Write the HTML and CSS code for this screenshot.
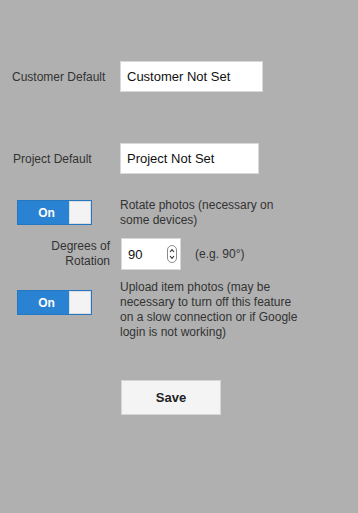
FILE: index.html
```html
<!DOCTYPE html>
<html>
<head>
<meta charset="utf-8">
<link rel="stylesheet" href="styles.css">
</head>
<body>
<div class="page">
  <div class="row row-customer">
    <div class="label label-customer">Customer Default</div>
    <div class="input input-customer">Customer Not Set</div>
  </div>
  <div class="row row-project">
    <div class="label label-project">Project Default</div>
    <div class="input input-project">Project Not Set</div>
  </div>
  <div class="row row-toggle row-rotate">
    <div class="toggle-cell">
      <div class="toggle"><span class="toggle-on">On</span><span class="knob"></span></div>
    </div>
    <div class="desc">Rotate photos (necessary on<br>some devices)</div>
  </div>
  <div class="row row-degrees">
    <div class="label-right">Degrees of<br>Rotation</div>
    <div class="number">
      <span class="num-val">90</span>
      <svg class="spin" width="10" height="18" viewBox="0 0 10 18">
        <rect x="0.5" y="0.5" width="9" height="17" rx="4.5" fill="none" stroke="#8a8a8a" stroke-width="1"/>
        <path d="M3 7 L5 4.6 L7 7" fill="none" stroke="#333" stroke-width="1.1"/>
        <path d="M3 11 L5 13.4 L7 11" fill="none" stroke="#333" stroke-width="1.1"/>
      </svg>
    </div>
    <div class="note">(e.g. 90°)</div>
  </div>
  <div class="row row-toggle row-upload">
    <div class="toggle-cell">
      <div class="toggle"><span class="toggle-on">On</span><span class="knob"></span></div>
    </div>
    <div class="desc">Upload item photos (may be<br>necessary to turn off this feature<br>on a slow connection or if Google<br>login is not working)</div>
  </div>
  <div class="row row-save">
    <div class="save">Save</div>
  </div>
</div>
</body>
</html>
```
FILE: styles.css
```css
html, body {
  margin: 0;
  padding: 0;
  background: #b0b0b0;
  height: 100%;
}
body {
  font-family: "Liberation Sans", Arial, Helvetica, sans-serif;
  color: #333;
}
.page {
  display: flex;
  flex-direction: column;
  padding-top: 61px;
}
.row {
  display: flex;
  align-items: center;
}
.label {
  width: 120px;
  box-sizing: border-box;
  font-size: 12px;
  color: #333;
}
.label-customer { padding-left: 12px; }
.label-project { padding-left: 13px; }
.input {
  background: #fff;
  border: 1px solid #d8d8d8;
  box-sizing: border-box;
  height: 31px;
  display: flex;
  align-items: center;
  padding-left: 6px;
  font-size: 13px;
  color: #111;
}
.input-customer { width: 143px; }
.row-project { margin-top: 51px; }
.input-project { width: 139px; }
.row-toggle {
  align-items: flex-start;
}
.row-rotate { margin-top: 24px; }
.row-upload { margin-top: 10px; }
.toggle-cell {
  width: 120px;
  padding-left: 17px;
  box-sizing: border-box;
}
.row-rotate .toggle-cell { padding-top: 2px; }
.row-upload .toggle-cell { padding-top: 10px; }
.toggle {
  width: 75px;
  height: 25px;
  box-sizing: border-box;
  background: #2a82d2;
  border: 1px solid #2677c2;
  display: flex;
  align-items: stretch;
}
.toggle-on {
  flex: 1;
  color: #fff;
  font-weight: bold;
  font-size: 12px;
  display: flex;
  align-items: center;
  justify-content: center;
  padding-left: 6px;
}
.knob {
  width: 22px;
  background: #f3f3f3;
  border: 1px solid #ddd;
  box-sizing: border-box;
}
.desc {
  font-size: 12px;
  line-height: 15px;
  color: #333;
}
.row-degrees {
  margin-top: 10px;
}
.label-right {
  width: 110px;
  text-align: right;
  font-size: 12px;
  line-height: 15px;
  color: #333;
}
.number {
  margin-left: 11px;
  width: 60px;
  height: 32px;
  box-sizing: border-box;
  background: #fff;
  border: 1px solid #d8d8d8;
  display: flex;
  align-items: center;
  padding-left: 6px;
  padding-right: 3px;
  font-size: 13px;
  color: #111;
}
.num-val { flex: 1; }
.spin { display: block; }
.note {
  margin-left: 14px;
  font-size: 12px;
  color: #333;
}
.row-save {
  margin-top: 40px;
  padding-left: 121px;
}
.save {
  width: 100px;
  height: 35px;
  box-sizing: border-box;
  background: #f4f4f4;
  border: 1px solid #d6d6d6;
  display: flex;
  align-items: center;
  justify-content: center;
  font-weight: bold;
  font-size: 13px;
  color: #222;
}
```
